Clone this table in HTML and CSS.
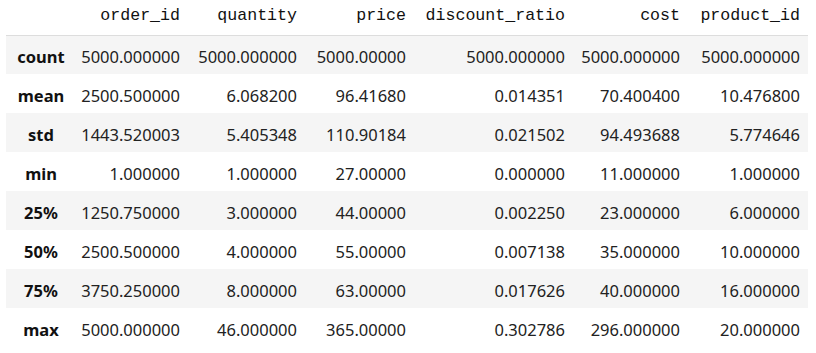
FILE: index.html
```html
<!DOCTYPE html>
<html lang="en">
<head>
  <meta charset="UTF-8">
  <title>describe()</title>
  <link rel="stylesheet" href="styles.css">
</head>
<body>

<table class="dataframe">
  <colgroup>
    <col class="c-index">
    <col class="c-order">
    <col class="c-qty">
    <col class="c-price">
    <col class="c-disc">
    <col class="c-cost">
    <col class="c-prod">
  </colgroup>
  <thead>
    <tr><th></th><th>order_id</th><th>quantity</th><th>price</th><th>discount_ratio</th><th>cost</th><th>product_id</th></tr>
  </thead>
  <tbody>
    <tr><th>count</th><td>5000.000000</td><td>5000.000000</td><td>5000.00000</td><td>5000.000000</td><td>5000.000000</td><td>5000.000000</td></tr>
    <tr><th>mean</th><td>2500.500000</td><td>6.068200</td><td>96.41680</td><td>0.014351</td><td>70.400400</td><td>10.476800</td></tr>
    <tr><th>std</th><td>1443.520003</td><td>5.405348</td><td>110.90184</td><td>0.021502</td><td>94.493688</td><td>5.774646</td></tr>
    <tr><th>min</th><td>1.000000</td><td>1.000000</td><td>27.00000</td><td>0.000000</td><td>11.000000</td><td>1.000000</td></tr>
    <tr><th>25%</th><td>1250.750000</td><td>3.000000</td><td>44.00000</td><td>0.002250</td><td>23.000000</td><td>6.000000</td></tr>
    <tr><th>50%</th><td>2500.500000</td><td>4.000000</td><td>55.00000</td><td>0.007138</td><td>35.000000</td><td>10.000000</td></tr>
    <tr><th>75%</th><td>3750.250000</td><td>8.000000</td><td>63.00000</td><td>0.017626</td><td>40.000000</td><td>16.000000</td></tr>
    <tr><th>max</th><td>5000.000000</td><td>46.000000</td><td>365.00000</td><td>0.302786</td><td>296.000000</td><td>20.000000</td></tr>
  </tbody>
</table>

</body>
</html>
```

FILE: styles.css
```css
body {
  margin: 0;
  padding: 0 6px;
  background: #fff;
  color: #222;
  font-family: 'Noto Sans', sans-serif;
  font-size: 16.5px;
}

.dataframe {
  border-collapse: collapse;
  table-layout: fixed;
  width: 802px;
}

.c-index { width: 66px; }
.c-order { width: 116px; }
.c-qty { width: 117px; }
.c-price { width: 109px; }
.c-disc { width: 159px; }
.c-cost { width: 115px; }
.c-prod { width: 120px; }

.dataframe thead tr {
  height: 35px;
}

.dataframe thead th {
  font-family: 'Liberation Mono', monospace;
  font-weight: normal;
  font-size: 16.6px;
  line-height: 20px;
  text-align: right;
  color: #111;
  padding: 6px 8px 0 0;
  border-bottom: 1px solid #ddd;
  vertical-align: top;
}

.dataframe tbody tr {
  height: 39px;
}

.dataframe tbody tr:nth-child(odd) {
  background: #f5f5f5;
}

.dataframe tbody th {
  font-weight: bold;
  text-align: center;
  color: #111;
  padding: 3px 0 0 4px;
}

.dataframe td {
  text-align: right;
  padding: 3px 8px 0 0;
  white-space: nowrap;
}
```
